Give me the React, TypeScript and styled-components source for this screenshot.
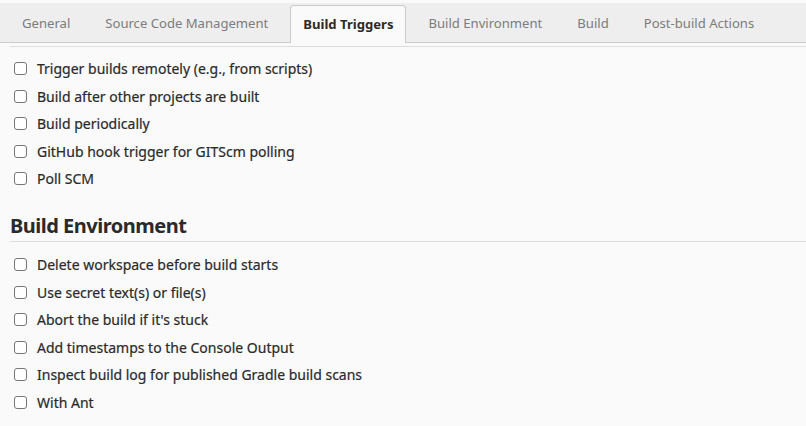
import React from "react";
import styled, { createGlobalStyle } from "styled-components";

const Global = createGlobalStyle`
  html, body { margin: 0; padding: 0; background: #fafafa; }
  body { font-family: "Noto Sans", "DejaVu Sans", sans-serif; color: #333; }
  * { box-sizing: border-box; }
`;

const Page = styled.div`
  width: 806px;
  height: 426px;
  overflow: hidden;
  background: #fafafa;
  padding-top: 3px;
`;

const TabBar = styled.div`
  display: flex;
  align-items: flex-end;
  gap: 9px;
  height: 40px;
  padding-left: 9px;
  background: #eeeeee;
  border-bottom: 1px solid #cccccc;
`;

const Tab = styled.div<{ $active?: boolean }>`
  display: flex;
  align-items: center;
  height: ${(p) => (p.$active ? "38px" : "37px")};
  padding: 0 12px 2px;
  margin-bottom: ${(p) => (p.$active ? "-1px" : "0")};
  font-size: 13.1px;
  color: ${(p) => (p.$active ? "#2a2a2a" : "#7c7c7c")};
  font-weight: ${(p) => (p.$active ? 700 : 400)};
  background: ${(p) => (p.$active ? "#fafafa" : "transparent")};
  border: 1px solid ${(p) => (p.$active ? "#cccccc" : "transparent")};
  border-bottom: none;
  border-radius: 4px 4px 0 0;
  white-space: nowrap;
`;

const Content = styled.div`
  padding: 3px 0 0 10px;
`;

const Divider = styled.div`
  height: 1px;
  background: #dddddd;
`;

const List = styled.div<{ $top: number }>`
  display: flex;
  flex-direction: column;
  padding-top: ${(p) => p.$top}px;
`;

const Row = styled.label`
  display: flex;
  align-items: center;
  height: 27.5px;
  gap: 10px;
  padding-left: 4px;
  font-size: 14px;
  color: #2a2a2a;
  -webkit-text-stroke: 0.2px #2a2a2a;
`;

const Box = styled.span`
  width: 13px;
  height: 13px;
  border: 1px solid #767676;
  border-radius: 3px;
  background: #fff;
  flex: none;
`;

const Heading = styled.h2`
  margin: 19px 0 0 0;
  font-size: 20px;
  letter-spacing: -0.5px;
  font-weight: 700;
  color: #2a2a2a;
  line-height: 28px;
  padding-bottom: 1px;
  border-bottom: 1px solid #dddddd;
`;

const tabs = [
  "General",
  "Source Code Management",
  "Build Triggers",
  "Build Environment",
  "Build",
  "Post-build Actions",
];

const triggers = [
  "Trigger builds remotely (e.g., from scripts)",
  "Build after other projects are built",
  "Build periodically",
  "GitHub hook trigger for GITScm polling",
  "Poll SCM",
];

const env = [
  "Delete workspace before build starts",
  "Use secret text(s) or file(s)",
  "Abort the build if it's stuck",
  "Add timestamps to the Console Output",
  "Inspect build log for published Gradle build scans",
  "With Ant",
];

export default function App() {
  return (
    <>
      <Global />
      <Page>
        <TabBar>
          {tabs.map((t) => (
            <Tab key={t} $active={t === "Build Triggers"}>
              {t}
            </Tab>
          ))}
        </TabBar>
        <Content>
          <Divider />
          <List $top={8}>
            {triggers.map((t) => (
              <Row key={t}>
                <Box />
                {t}
              </Row>
            ))}
          </List>
          <Heading>Build Environment</Heading>
          <List $top={9.5}>
            {env.map((t) => (
              <Row key={t}>
                <Box />
                {t}
              </Row>
            ))}
          </List>
        </Content>
      </Page>
    </>
  );
}
